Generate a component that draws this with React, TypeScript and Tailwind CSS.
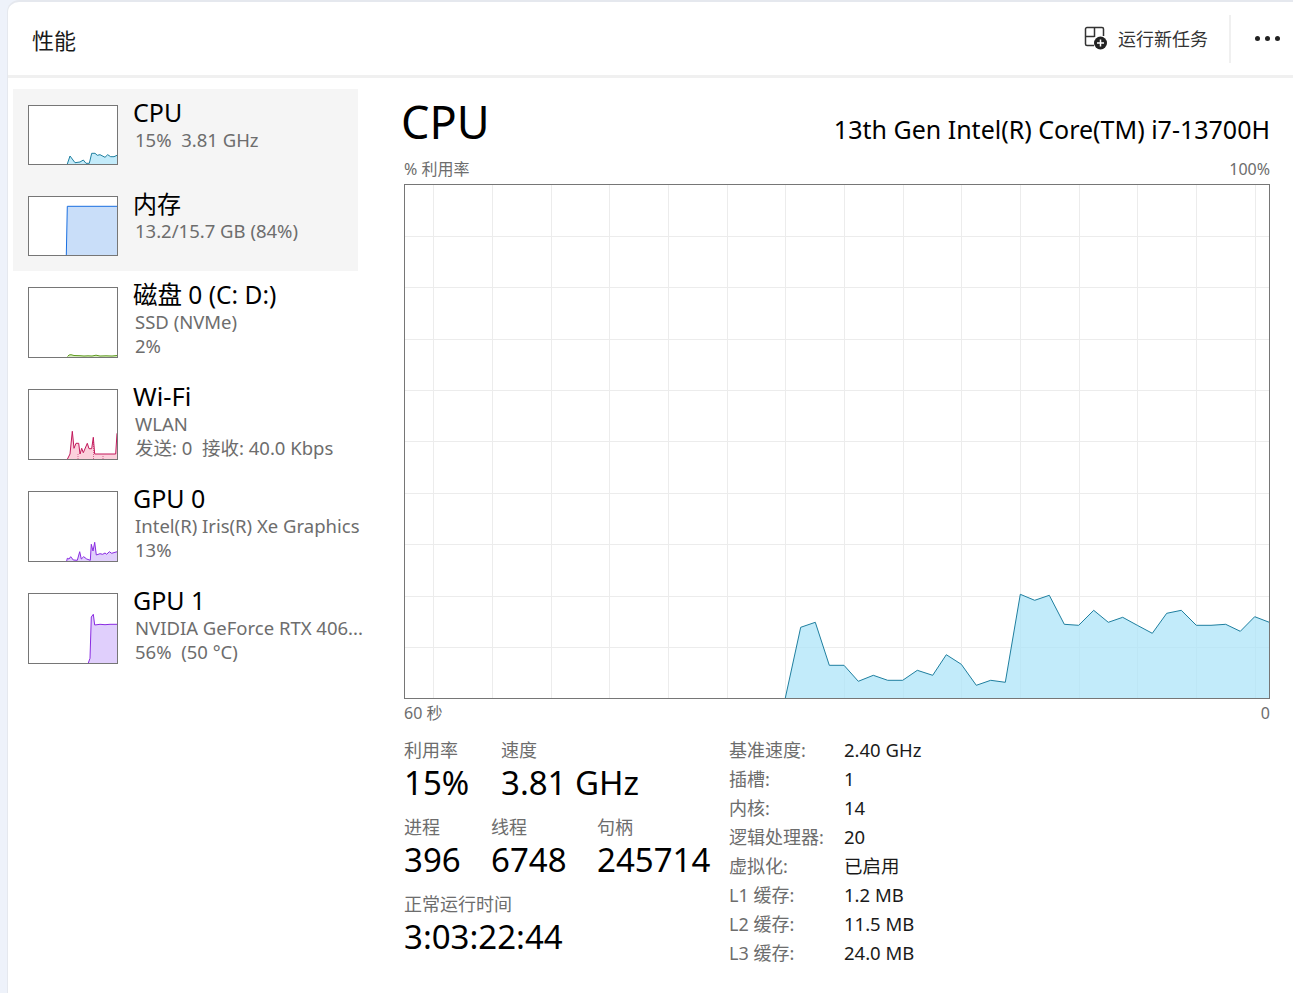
const font = { fontFamily: '"Noto Sans", "Noto Sans CJK SC", sans-serif' }

type Thumb = {
  title: string
  titleSize: string
  lines: string[]
  box: string
  height: string
  points: string
  stroke: string
  fill: string
  extra?: string
}

const thumbs: Thumb[] = [
  {
    title: 'CPU',
    titleSize: 'text-[25px] leading-[28px]',
    lines: ['15%  3.81 GHz'],
    box: '29 106 88 58',
    height: 'h-[60px]',
    points:
      '67.3,164 70,156 75,162.7 80,162 83.3,160 86,163.3 89.3,163.3 91.7,153.3 95,153.3 97.3,155.3 100,154.7 105,157.3 107.7,154.7 110.7,156.7 114,156.7 117,155.3',
    stroke: '#1f7f9f',
    fill: '#c3ebfa',
  },
  {
    title: '内存',
    titleSize: 'text-[24px] leading-[30px]',
    lines: ['13.2/15.7 GB (84%)'],
    box: '29 197 88 58',
    height: 'h-[60px]',
    points: '66.3,255 67.3,206.3 117,206.3',
    stroke: '#1a6fe0',
    fill: '#c9def9',
  },
  {
    title: '磁盘 0 (C: D:)',
    titleSize: 'text-[24.500px] leading-[30px]',
    lines: ['SSD (NVMe)', '2%'],
    box: '29 288 88 69',
    height: 'h-[71px]',
    points:
      '67.5,356.5 69,355 71,354.7 74,355.5 80,355.7 84,356 88,355.8 92,356 96,355.2 100,356 106,355.8 112,356 117,355.5',
    stroke: '#5f9a1f',
    fill: '#d8eec0',
  },
  {
    title: 'Wi-Fi',
    titleSize: 'text-[25.500px] leading-[28px]',
    lines: ['WLAN', '发送: 0  接收: 40.0 Kbps'],
    box: '29 390 88 69',
    height: 'h-[71px]',
    points:
      '67.3,459.3 70,454 72.3,431.3 74,448.3 76,443.3 78.7,443.3 80,454 81.7,448.3 83.3,452.7 87.3,443.3 89,448.7 91.7,448.7 93.3,437.3 94.7,454 115.7,454 117,433.3',
    stroke: '#c2185b',
    fill: '#fbd0dc',
    extra: 'M78,459V454 M93.5,459V438 M103,459V455',
  },
  {
    title: 'GPU 0',
    titleSize: 'text-[25px] leading-[28px]',
    lines: ['Intel(R) Iris(R) Xe Graphics', '13%'],
    box: '29 492 88 69',
    height: 'h-[71px]',
    points:
      '66.7,561 67.3,558.3 69,559 70.7,556.7 73.3,560 77.3,560.3 79.7,551.7 81.3,559 83.7,556.7 86.7,559 90.3,560.3 91.3,544.3 93,551 94.7,542.3 96.3,555 100,553.7 102.7,554.3 105,553 106.7,554.3 109.3,551.7 111.7,553.3 115,552.3 117.3,551.7',
    stroke: '#8a2be2',
    fill: '#e0cffc',
  },
  {
    title: 'GPU 1',
    titleSize: 'text-[25px] leading-[28px]',
    lines: ['NVIDIA GeForce RTX 406...', '56%  (50 °C)'],
    box: '29 594 88 69',
    height: 'h-[71px]',
    points:
      '88.3,663 90,658.3 91.3,617 93.3,614.3 94.7,625 100,624.3 105,624.7 110,624.3 117.3,624.3',
    stroke: '#8a2be2',
    fill: '#e0cffc',
  },
]

const cpuPoints =
  '785.3,698 800.7,627.3 815.3,622.3 829.3,665.3 844,665.3 858.3,681.3 873.3,675.3 887.7,680.3 902.7,680.3 917.3,670.3 932.7,675.3 946.3,654.7 961.3,664.3 976.3,685.3 990.7,680.3 1005.3,682.3 1020.3,594.3 1034.7,600.3 1049.3,595.3 1064.3,624.3 1078.7,625.3 1093.7,610.3 1108.3,622.3 1122.7,617.3 1137.3,625.3 1152.3,633.3 1166.7,613.3 1181.3,610.3 1196.3,625.3 1211,625.3 1225.7,624.3 1240.3,631.3 1254.7,616.7 1269.3,622.3'

const gridX = [433, 492, 551, 609, 668, 727, 785, 844, 903, 961, 1020, 1079, 1137, 1196, 1255]
const gridY = [236, 287, 339, 390, 441, 493, 544, 596, 647]

const specs = [
  ['基准速度:', '2.40 GHz'],
  ['插槽:', '1'],
  ['内核:', '14'],
  ['逻辑处理器:', '20'],
  ['虚拟化:', '已启用'],
  ['L1 缓存:', '1.2 MB'],
  ['L2 缓存:', '11.5 MB'],
  ['L3 缓存:', '24.0 MB'],
]

function areaPath(points: string) {
  const pts = points.split(' ')
  const first = pts[0].split(',')[0]
  const last = pts[pts.length - 1].split(',')[0]
  return `M${first},9999 L${pts.join(' L')} L${last},9999 Z`
}

function ThumbRow({ t }: { t: Thumb }) {
  return (
    <div className={`flex ${t.height}`}>
      <div className="h-full w-[90px] shrink-0 border border-[#767676] bg-white">
        <svg className="block h-full w-full" viewBox={t.box} preserveAspectRatio="none">
          <path d={areaPath(t.points)} fill={t.fill} />
          {t.extra && <path d={t.extra} stroke={t.stroke} strokeWidth="1" strokeDasharray="1 1" opacity="0.6" fill="none" />}
          <polyline points={t.points} fill="none" stroke={t.stroke} strokeWidth="1" />
        </svg>
      </div>
      <div className="ml-[15px] min-w-0 whitespace-pre">
        <div className={`mt-[-7px] h-[30px] text-black ${t.titleSize}`}>{t.title}</div>
        {t.lines.map((line) => (
          <div key={line} className="ml-[2px] h-[24px] text-[18.500px] leading-[24px] text-[#6d6d6d]">
            {line}
          </div>
        ))}
      </div>
    </div>
  )
}

function Stat({ label, value, className }: { label: string; value: string; className: string }) {
  return (
    <div className={className}>
      <div className="h-[24px] text-[18px] leading-[26px] text-[#6d6d6d]">{label}</div>
      <div className="h-[44px] text-[33px] leading-[44px] text-black">{value}</div>
    </div>
  )
}

export default function App() {
  return (
    <div className="flex h-[993px] w-[1293px] overflow-hidden bg-[#eef2fa] pl-[7px]" style={font}>
      <div className="flex flex-1 flex-col rounded-tl-xl border-t-2 border-l border-[#e5e8ee] bg-white">
        {/* header */}
        <div className="flex h-[76px] shrink-0 items-center border-b-[3px] border-[#f0f0f0]">
          <div className="ml-[24px] mt-[4px] text-[22px] text-[#1a1a1a]">性能</div>
          <div className="ml-auto flex items-center">
            <svg width="24" height="24" viewBox="0 0 24 24" className="mr-[10px] mt-[-1px]">
              <path
                d="M3 1.5h15a1.5 1.5 0 0 1 1.5 1.5v7M10.5 1.5v9.5M1.5 10.500h9M10 19.500H3A1.500 1.500 0 0 1 1.500 18V3A1.500 1.500 0 0 1 3 1.500"
                fill="none"
                stroke="#333"
                strokeWidth="1.500"
              />
              <circle cx="16.500" cy="17" r="6.500" fill="#222" />
              <path d="M16.500 13.500v7M13 17h7" stroke="#fff" strokeWidth="1.500" />
            </svg>
            <span className="mt-[2px] text-[18px] text-[#333]">运行新任务</span>
            <div className="ml-[21px] h-[48px] w-[2px] bg-[#f0f0f0]" />
            <div className="ml-[24px] mr-[13px] flex gap-[5px]">
              <span className="h-[5px] w-[5px] rounded-full bg-[#222]" />
              <span className="h-[5px] w-[5px] rounded-full bg-[#222]" />
              <span className="h-[5px] w-[5px] rounded-full bg-[#222]" />
            </div>
          </div>
        </div>

        <div className="flex flex-1">
          {/* sidebar */}
          <div className="w-[396px] shrink-0 pl-[5px] pt-[11px]">
            <div className="flex h-[182px] w-[345px] flex-col gap-[31px] bg-[#f5f5f5] pl-[15px] pt-[16px]">
              <ThumbRow t={thumbs[0]} />
              <ThumbRow t={thumbs[1]} />
            </div>
            <div className="mt-[16px] flex flex-col gap-[31px] pl-[15px]">
              {thumbs.slice(2).map((t) => (
                <ThumbRow key={t.title} t={t} />
              ))}
            </div>
          </div>

          {/* main panel */}
          <div className="flex-1 pr-[23px]">
            <div className="flex h-[76px] items-end justify-between">
              <div className="mb-[2px] ml-[-3px] text-[45px] leading-[60px] text-black">CPU</div>
              <div className="mb-[9px] text-[25px] leading-[32px] text-black">13th Gen Intel(R) Core(TM) i7-13700H</div>
            </div>
            <div className="mt-[2px] mb-[3px] flex h-[25px] items-center justify-between text-[16px] text-[#6d6d6d]">
              <span>% 利用率</span>
              <span>100%</span>
            </div>
            <div className="h-[515px] border border-[#767676]">
              <svg className="block h-full w-full" viewBox="405 185 864 513" preserveAspectRatio="none">
                {gridX.map((x) => (
                  <line key={x} x1={x + 0.5} x2={x + 0.5} y1="185" y2="698" stroke="#ececec" />
                ))}
                {gridY.map((y) => (
                  <line key={y} x1="405" x2="1269" y1={y + 0.5} y2={y + 0.5} stroke="#ececec" />
                ))}
                <path d={areaPath(cpuPoints)} fill="#aee4f8" opacity="0.75" />
                <polyline points={cpuPoints} fill="none" stroke="#1f7f9f" strokeWidth="1" />
              </svg>
            </div>
            <div className="flex h-[28px] items-center justify-between text-[16px] text-[#6d6d6d]">
              <span>60 秒</span>
              <span>0</span>
            </div>

            {/* stats */}
            <div className="mt-[10px] flex whitespace-pre">
              <div className="w-[325px]">
                <div className="flex">
                  <Stat label="利用率" value="15%" className="w-[97px]" />
                  <Stat label="速度" value="3.81 GHz" className="" />
                </div>
                <div className="mt-[9px] flex">
                  <Stat label="进程" value="396" className="w-[87px]" />
                  <Stat label="线程" value="6748" className="w-[106px]" />
                  <Stat label="句柄" value="245714" className="" />
                </div>
                <Stat label="正常运行时间" value="3:03:22:44" className="mt-[9px]" />
              </div>
              <div className="mt-[-1px] flex flex-col">
                {specs.map(([k, v]) => (
                  <div key={k} className="flex h-[29px] items-center">
                    <span className="w-[115px] text-[18px] text-[#6d6d6d]">{k}</span>
                    <span className="mb-[2px] text-[18.500px] text-[#1a1a1a]">{v}</span>
                  </div>
                ))}
              </div>
            </div>
          </div>
        </div>
      </div>
    </div>
  )
}
